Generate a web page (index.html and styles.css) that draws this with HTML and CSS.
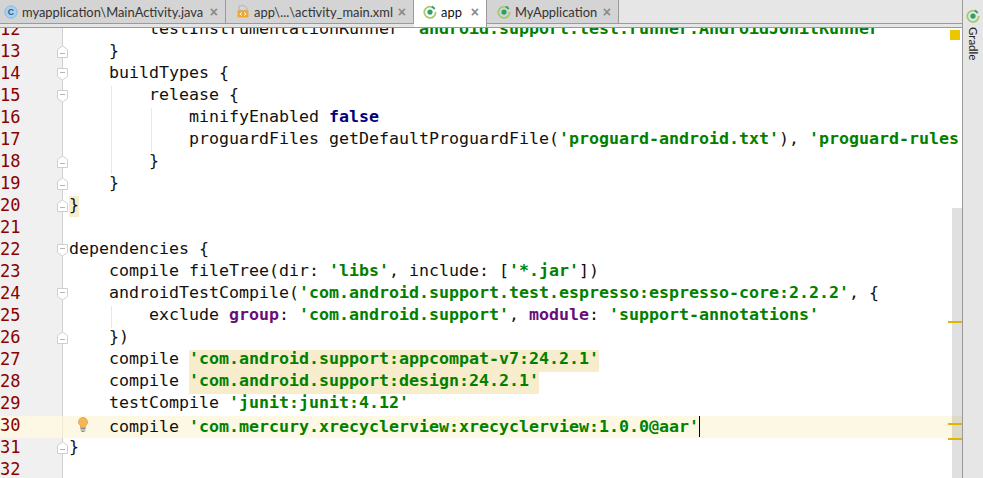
FILE: index.html
```html
<!DOCTYPE html>
<html lang="en">
<head>
<meta charset="utf-8">
<title>app - build.gradle</title>
<link rel="stylesheet" href="styles.css">
</head>
<body>
<svg class="defs" width="0" height="0" aria-hidden="true">
  <defs>
    <g id="gradle">
      <path d="M13.300 4.500A6.500 6.500 0 1 0 14.500 8" fill="none" stroke="#a3c96b" stroke-width="2"/>
      <path d="M10 1.800A6.500 6.500 0 0 1 13.300 4.500" fill="none" stroke="#3a9a6a" stroke-width="2"/>
      <circle cx="8" cy="8" r="3" fill="#2aa267"/>
    </g>
    <g id="fold-start">
      <path d="M.5.500h10v8l-5 3.500-5-3.500z" fill="#fff" stroke="#cfcfcf"/>
      <path d="M3 4.500h5" stroke="#b5b5b5"/>
    </g>
    <g id="fold-end">
      <path d="M.5 11.500h10v-8l-5-3.500-5 3.500z" fill="#fff" stroke="#cfcfcf"/>
      <path d="M3 7.500h5" stroke="#b5b5b5"/>
    </g>
  </defs>
</svg>
<div class="ide">
  <main class="main">
    <nav class="tabs">
      <div class="tab tab-java">
        <svg class="ico" viewBox="0 0 16 16"><circle cx="8" cy="8" r="7" fill="#a9d2f0" stroke="#7fb4dd"/><text x="8" y="11.500" text-anchor="middle" class="ico-c">C</text></svg>
        <span>myapplication\MainActivity.java</span><span class="x">×</span>
      </div>
      <div class="tab tab-xml">
        <svg class="ico" viewBox="0 0 16 18"><path d="M3 1h7l3 3v3H3z" fill="#d5d5d5" stroke="#aaa"/><rect x="1" y="7" width="14" height="9" fill="#f0a732"/><path d="M6.500 9.500l-2.500 2 2.500 2M9.500 9.500l2.500 2-2.500 2" fill="none" stroke="#fff" stroke-width="1.200"/></svg>
        <span>app\...\activity_main.xml</span><span class="x">×</span>
      </div>
      <div class="tab tab-app active">
        <svg class="ico" viewBox="0 0 16 16"><use href="#gradle"/></svg>
        <span>app</span><span class="x">×</span>
      </div>
      <div class="tab tab-my">
        <svg class="ico" viewBox="0 0 16 16"><use href="#gradle"/></svg>
        <span>MyApplication</span><span class="x">×</span>
      </div>
      <div class="tabs-rest"></div>
    </nav>
    <section class="editor">
      <div class="lines">
        <div class="row"><span class="num">12</span><code class="code">        testInstrumentationRunner <s>"android.support.test.runner.AndroidJUnitRunner"</s></code></div>
        <div class="row"><span class="num">13</span><svg class="fold" viewBox="0 0 11 12"><use href="#fold-end"/></svg><code class="code">    }</code></div>
        <div class="row"><span class="num">14</span><svg class="fold" viewBox="0 0 11 12"><use href="#fold-start"/></svg><code class="code">    buildTypes {</code></div>
        <div class="row"><span class="num">15</span><svg class="fold" viewBox="0 0 11 12"><use href="#fold-start"/></svg><i class="guide g1"></i><code class="code">        release {</code></div>
        <div class="row"><span class="num">16</span><i class="guide g1"></i><i class="guide g2"></i><code class="code">            minifyEnabled <b>false</b></code></div>
        <div class="row"><span class="num">17</span><i class="guide g1"></i><i class="guide g2"></i><code class="code">            proguardFiles getDefaultProguardFile(<s>'proguard-android.txt'</s>), <s>'proguard-rules.pro'</s></code></div>
        <div class="row"><span class="num">18</span><svg class="fold" viewBox="0 0 11 12"><use href="#fold-end"/></svg><i class="guide g1"></i><code class="code">        }</code></div>
        <div class="row"><span class="num">19</span><svg class="fold" viewBox="0 0 11 12"><use href="#fold-end"/></svg><code class="code">    }</code></div>
        <div class="row"><span class="num">20</span><svg class="fold" viewBox="0 0 11 12"><use href="#fold-end"/></svg><code class="code"><em class="match">}</em></code></div>
        <div class="row"><span class="num">21</span><code class="code"></code></div>
        <div class="row"><span class="num">22</span><svg class="fold" viewBox="0 0 11 12"><use href="#fold-start"/></svg><code class="code">dependencies {</code></div>
        <div class="row"><span class="num">23</span><code class="code">    compile fileTree(dir: <s>'libs'</s>, include: [<s>'*.jar'</s>])</code></div>
        <div class="row"><span class="num">24</span><svg class="fold" viewBox="0 0 11 12"><use href="#fold-start"/></svg><code class="code">    androidTestCompile(<s>'com.android.support.test.espresso:espresso-core:2.2.2'</s>, {</code></div>
        <div class="row"><span class="num">25</span><i class="guide g1"></i><code class="code">        exclude <u>group</u>: <s>'com.android.support'</s>, <u>module</u>: <s>'support-annotations'</s></code></div>
        <div class="row"><span class="num">26</span><svg class="fold" viewBox="0 0 11 12"><use href="#fold-end"/></svg><code class="code">    })</code></div>
        <div class="row"><span class="num">27</span><code class="code">    compile <s class="warn">'com.android.support:appcompat-v7:24.2.1'</s></code></div>
        <div class="row"><span class="num">28</span><code class="code">    compile <s class="warn">'com.android.support:design:24.2.1'</s></code></div>
        <div class="row"><span class="num">29</span><code class="code">    testCompile <s>'junit:junit:4.12'</s></code></div>
        <div class="row current"><span class="num">30</span>
          <svg class="bulb" viewBox="0 0 10 15"><path d="M5 .5a4.500 4.500 0 0 0-2.500 8.200V10.500h5V8.700A4.500 4.500 0 0 0 5 .5z" fill="#f5b657" stroke="#e8a546"/><path d="M2.500 11.500h5M2.500 13h5M3.500 14.500h3" stroke="#8a8a8a"/></svg>
          <code class="code">    compile <s>'com.mercury.xrecyclerview:xrecyclerview:1.0.0@aar'</s><span class="caret"></span></code></div>
        <div class="row"><span class="num">31</span><svg class="fold" viewBox="0 0 11 12"><use href="#fold-end"/></svg><code class="code">}</code></div>
        <div class="row"><span class="num">32</span><code class="code"></code></div>
      </div>
      <div class="scrollbar"></div>
      <div class="status-mark"></div>
      <div class="tick t1"></div>
      <div class="tick t2"></div>
      <div class="tick t3"></div>
    </section>
  </main>
  <aside class="side">
    <svg class="side-ico" viewBox="0 0 16 16"><use href="#gradle"/></svg>
    <span class="side-label">Gradle</span>
  </aside>
</div>
</body>
</html>
```
FILE: styles.css
```css
* { box-sizing: border-box; }
html, body { margin: 0; height: 100%; overflow: hidden; }
.defs { position: absolute; }
.ide {
  display: flex;
  width: 983px;
  height: 478px;
  background: #fff;
  font-family: Lato, "Open Sans", sans-serif;
}
.main {
  flex: 0 0 962px;
  display: flex;
  flex-direction: column;
  min-width: 0;
}
.tabs {
  flex: 0 0 28px;
  display: flex;
  align-items: flex-start;
  background: #e6e6e6;
  border-bottom: 1px solid #9a9a9a;
}
.tab {
  height: 24px;
  display: flex;
  align-items: center;
  gap: 4px;
  background: #d4d4d4;
  border-right: 1px solid #9a9a9a;
  border-bottom: 1px solid #9a9a9a;
  color: #333;
  font-size: 12.900px;
  white-space: nowrap;
}
.tab-java { flex: 0 0 226px; padding: 0 7px 0 4px; }
.tab-xml { flex: 0 0 188px; padding: 0 7px 0 10px; }
.tab-app { flex: 0 0 73px; height: 27px; padding: 0 7px 3px 9px; background: #fff; color: #111; border-bottom: 0; }
.tab-my { flex: 0 0 132px; padding: 0 7px 0 10px; }
.tabs-rest {
  flex: 1;
  height: 24px;
  border-bottom: 1px solid #9a9a9a;
}
.tab .x {
  margin-left: auto;
  color: #8a8a8a;
  font: 700 14px/1 "Liberation Sans", sans-serif;
}
.ico { width: 14px; height: 14px; flex: none; }
.ico-c { font: 700 10px "Liberation Sans", sans-serif; fill: #2a5d8c; }
.editor {
  position: relative;
  flex: 1;
  overflow: hidden;
  background: #fff;
}
.lines { margin-top: -8px; }
.row {
  position: relative;
  display: flex;
  height: 22px;
}
.current { background: #fdf8e3; }
.num {
  flex: 0 0 63px;
  height: 22px;
  background: #f0f0f0;
  border-right: 1px solid #d0d0d0;
  color: #8b0000;
  font: 17px/18px "DejaVu Sans Mono", monospace;
}
.current .num { background: #fdf8e3; border-right-color: #f0ead0; }
.code {
  padding-left: 6px;
  color: #111;
  font: 16.612px/18px "DejaVu Sans Mono", monospace;
  white-space: pre;
}
.code s { color: #008000; font-weight: 700; text-decoration: none; }
.code b { color: #000080; font-weight: 700; }
.code u { color: #660e7a; font-weight: 700; text-decoration: none; }
.code .warn { display: inline-block; height: 22px; background: #f7eccb; }
.match { display: inline-block; height: 21px; background: #f7eccb; font-style: normal; }
.caret {
  display: inline-block;
  width: 1px;
  height: 21px;
  vertical-align: -5px;
  background: #000;
}
.fold {
  position: absolute;
  left: 57px;
  top: 4px;
  width: 11px;
  height: 12px;
}
.guide {
  position: absolute;
  top: 0;
  bottom: 0;
  width: 1px;
  background: #e8e8e8;
}
.g1 { left: 111px; }
.g2 { left: 151px; }
.bulb {
  position: absolute;
  left: 78px;
  top: 1px;
  width: 10px;
  height: 15px;
}
.scrollbar {
  position: absolute;
  right: 0;
  top: 180px;
  bottom: 0;
  width: 10px;
  background: rgba(0, 0, 0, .12);
}
.status-mark {
  position: absolute;
  right: 2px;
  top: 2px;
  width: 10px;
  height: 10px;
  background: #edc600;
}
.tick {
  position: absolute;
  right: 0;
  width: 14px;
  height: 2px;
  background: #e0b400;
}
.t1 { top: 293px; }
.t2 { top: 395px; }
.t3 { top: 410px; }
.side {
  flex: 1;
  display: flex;
  flex-direction: column;
  align-items: center;
  padding-top: 9px;
  gap: 4px;
  background: #e6e6e6;
  border-left: 1px solid #9a9a9a;
}
.side-ico { width: 14px; height: 14px; }
.side-label {
  writing-mode: vertical-rl;
  color: #222;
  font-size: 11.500px;
  line-height: 1;
}
```
